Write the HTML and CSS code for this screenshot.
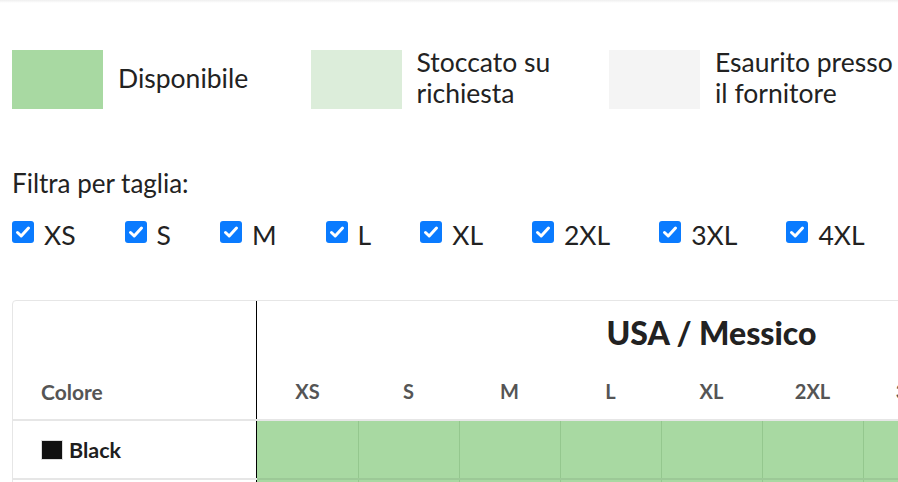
FILE: index.html
```html
<!DOCTYPE html>
<html lang="it">
<head>
<meta charset="utf-8">
<title>Disponibilità</title>
<link rel="stylesheet" href="styles.css">
</head>
<body>
<div class="shade"></div>
<div class="page">
  <div class="legend">
    <div class="legend-item">
      <span class="swatch swatch-available"></span>
      <span class="legend-text">Disponibile</span>
    </div>
    <div class="legend-item">
      <span class="swatch swatch-request"></span>
      <span class="legend-text">Stoccato su<br>richiesta</span>
    </div>
    <div class="legend-item">
      <span class="swatch swatch-out"></span>
      <span class="legend-text">Esaurito presso<br>il fornitore</span>
    </div>
  </div>

  <div class="filter-title">Filtra per taglia:</div>
  <div class="sizes">
    <label class="size"><span class="box"><svg viewBox="0 0 22 22" width="22" height="22"><path d="M5.5 11.5 L9.2 15 L16.5 7" fill="none" stroke="#fff" stroke-width="3" stroke-linecap="round" stroke-linejoin="round"/></svg></span>XS</label>
    <label class="size"><span class="box"><svg viewBox="0 0 22 22" width="22" height="22"><path d="M5.5 11.5 L9.2 15 L16.5 7" fill="none" stroke="#fff" stroke-width="3" stroke-linecap="round" stroke-linejoin="round"/></svg></span>S</label>
    <label class="size"><span class="box"><svg viewBox="0 0 22 22" width="22" height="22"><path d="M5.5 11.5 L9.2 15 L16.5 7" fill="none" stroke="#fff" stroke-width="3" stroke-linecap="round" stroke-linejoin="round"/></svg></span>M</label>
    <label class="size"><span class="box"><svg viewBox="0 0 22 22" width="22" height="22"><path d="M5.5 11.5 L9.2 15 L16.5 7" fill="none" stroke="#fff" stroke-width="3" stroke-linecap="round" stroke-linejoin="round"/></svg></span>L</label>
    <label class="size"><span class="box"><svg viewBox="0 0 22 22" width="22" height="22"><path d="M5.5 11.5 L9.2 15 L16.5 7" fill="none" stroke="#fff" stroke-width="3" stroke-linecap="round" stroke-linejoin="round"/></svg></span>XL</label>
    <label class="size"><span class="box"><svg viewBox="0 0 22 22" width="22" height="22"><path d="M5.5 11.5 L9.2 15 L16.5 7" fill="none" stroke="#fff" stroke-width="3" stroke-linecap="round" stroke-linejoin="round"/></svg></span>2XL</label>
    <label class="size"><span class="box"><svg viewBox="0 0 22 22" width="22" height="22"><path d="M5.5 11.5 L9.2 15 L16.5 7" fill="none" stroke="#fff" stroke-width="3" stroke-linecap="round" stroke-linejoin="round"/></svg></span>3XL</label>
    <label class="size"><span class="box"><svg viewBox="0 0 22 22" width="22" height="22"><path d="M5.5 11.5 L9.2 15 L16.5 7" fill="none" stroke="#fff" stroke-width="3" stroke-linecap="round" stroke-linejoin="round"/></svg></span>4XL</label>
  </div>

  <div class="table-wrap">
    <table class="stock">
      <thead>
        <tr class="region-row">
          <th class="color-head" rowspan="2">Colore</th>
          <th class="region" colspan="9">USA / Messico</th>
        </tr>
        <tr class="size-row">
          <th>XS</th><th>S</th><th>M</th><th>L</th><th>XL</th><th>2XL</th><th>3XL</th><th>4XL</th><th>5XL</th>
        </tr>
      </thead>
      <tbody>
        <tr>
          <td class="color-cell"><span class="color-dot"></span>Black</td>
          <td class="cell"></td><td class="cell"></td><td class="cell"></td><td class="cell"></td><td class="cell"></td><td class="cell"></td><td class="cell"></td><td class="cell"></td><td class="cell"></td>
        </tr>
        <tr>
          <td class="color-cell"><span class="color-dot"></span>White</td>
          <td class="cell"></td><td class="cell"></td><td class="cell"></td><td class="cell"></td><td class="cell"></td><td class="cell"></td><td class="cell"></td><td class="cell"></td><td class="cell"></td>
        </tr>
      </tbody>
    </table>
  </div>
</div>
</body>
</html>
```

FILE: styles.css
```css
html, body {
  margin: 0;
  padding: 0;
  background: #fff;
  overflow: hidden;
}
body {
  font-family: "Lato", "Liberation Sans", sans-serif;
  color: #222;
  width: 898px;
  height: 482px;
}
.shade {
  height: 3px;
  background: linear-gradient(#efefef, #fff);
}
.page {
  padding: 46px 0 0 12px;
}
.legend {
  display: flex;
  width: 1000px;
}
.legend-item {
  display: flex;
  align-items: center;
  gap: 15px;
  width: 298.5px;
}
.swatch {
  flex: none;
  width: 91px;
  height: 59px;
}
.swatch-available { background: #a8d9a2; }
.swatch-request { background: #dcedda; }
.swatch-out { background: #f4f4f4; }
.legend-text {
  font-size: 26.5px;
  line-height: 31px;
  white-space: nowrap;
  margin-top: -2px;
}
.filter-title {
  margin-top: 59px;
  font-size: 26px;
  line-height: 31px;
}
.sizes {
  display: flex;
  gap: 49px;
  margin-top: 21px;
  white-space: nowrap;
}
.size {
  display: flex;
  align-items: flex-start;
  gap: 10px;
  font-size: 26.5px;
  line-height: 31px;
}
.box {
  flex: none;
  width: 22px;
  height: 22px;
  margin-top: 1px;
  border-radius: 3px;
  background: #0a7bff;
  display: block;
}
.box svg { display: block; }
.table-wrap {
  margin-top: 49px;
  width: 1200px;
  border: 1px solid #e6e6e6;
  border-top-left-radius: 4px;
  overflow: hidden;
}
.stock {
  border-collapse: collapse;
}
.stock th { padding: 0; }
.stock .color-head {
  width: 215px;
  border-right: 1px solid #000;
  border-bottom: 2px solid #e6e6e6;
  text-align: left;
  vertical-align: bottom;
  padding: 0 0 15px 28px;
  font-size: 21px;
  line-height: 25px;
  font-weight: 700;
  color: #555;
}
.region {
  height: 62px;
  font-size: 32px;
  font-weight: 900;
  color: #222;
  text-align: center;
  vertical-align: middle;
}
.size-row th {
  width: 101px;
  height: 56px;
  font-size: 20px;
  font-weight: 700;
  color: #555;
  border-bottom: 2px solid #e6e6e6;
  vertical-align: middle;
}
.color-cell {
  height: 57px;
  padding: 0 0 0 28px;
  border-right: 1px solid #000;
  border-bottom: 2px solid #e6e6e6;
  font-size: 21.5px;
  font-weight: 700;
  color: #1e1e1e;
  white-space: nowrap;
}
.color-dot {
  display: inline-block;
  width: 20px;
  height: 18px;
  background: #111;
  border: 1px solid #ddd;
  margin-right: 6px;
  vertical-align: -2px;
}
.cell {
  background: #a8d9a2;
  border-right: 1px solid #94c78e;
  border-bottom: 2px solid #9cc997;
}
```
